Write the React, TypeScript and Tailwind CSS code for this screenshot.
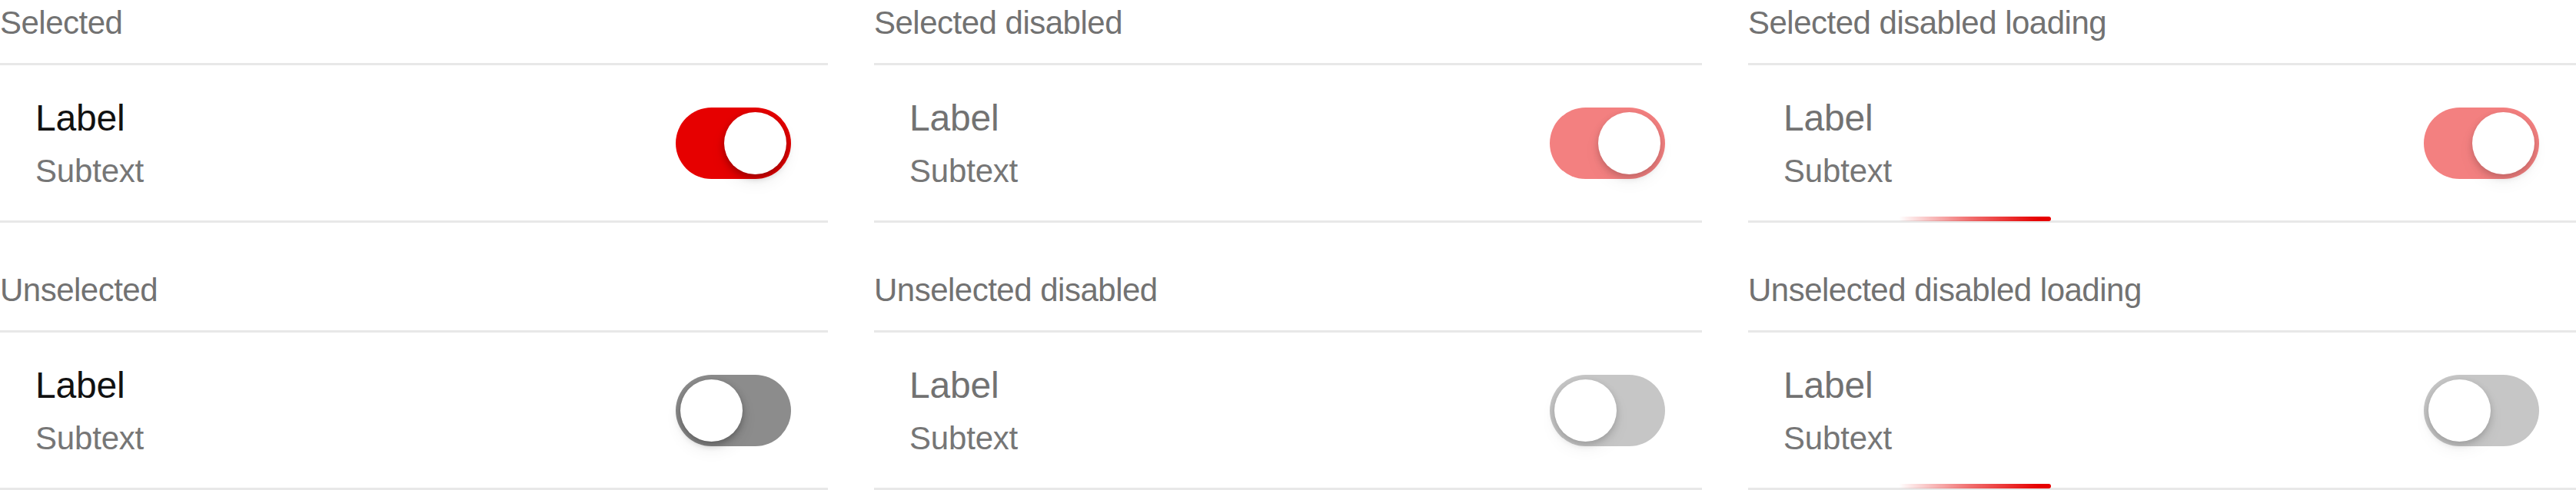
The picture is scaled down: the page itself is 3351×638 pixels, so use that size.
import React from 'react';

type Variant = {
  title: string;
  on: boolean;
  disabled?: boolean;
  loading?: boolean;
};

const font = { fontFamily: '"Liberation Sans", Arial, sans-serif' };

const Toggle = ({ on, disabled }: { on: boolean; disabled?: boolean }) => {
  const track = on
    ? disabled
      ? 'bg-[#f38080]'
      : 'bg-[#e60000]'
    : disabled
      ? 'bg-[#c6c6c6]'
      : 'bg-[#8c8c8c]';
  return (
    <div className={`w-[150px] h-[93px] rounded-full p-[6px] flex shrink-0 ${on ? 'justify-end' : 'justify-start'} ${track}`}>
      <div
        className={`w-[81px] h-[81px] rounded-full bg-white ${
          disabled
            ? 'shadow-[0_4px_10px_rgba(0,0,0,0.18),0_10px_22px_rgba(0,0,0,0.05)]'
            : 'shadow-[0_4px_10px_rgba(0,0,0,0.3),0_10px_22px_rgba(0,0,0,0.07)]'
        }`}
      />
    </div>
  );
};

const Section = ({ title, on, disabled, loading }: Variant) => (
  <div className="flex flex-col">
    <div className="h-[82px] text-[42px] leading-[60px] text-[#727272] tracking-[-0.012em] whitespace-nowrap border-b-[3px] border-[#e8e8e8] box-content">
      {title}
    </div>
    <div className="relative h-[202px] box-content border-b-[3px] border-[#e8e8e8] flex items-center justify-between pl-[46px] pr-[48px]">
      <div className="flex flex-col tracking-[-0.012em]">
        <span className={`text-[48px] leading-[74px] ${disabled ? 'text-[#727272]' : 'text-[#111]'}`}>Label</span>
        <span className="text-[42px] leading-[64px] text-[#767676]">Subtext</span>
      </div>
      <Toggle on={on} disabled={disabled} />
      {loading && (
        <div className="absolute left-[196px] bottom-[-1px] w-[198px] h-[6px] rounded-r-full bg-[linear-gradient(to_right,rgba(230,0,0,0),rgba(230,0,0,0.55)_45%,#e60000_92%)]" />
      )}
    </div>
  </div>
);

const columns: Variant[][] = [
  [
    { title: 'Selected', on: true },
    { title: 'Unselected', on: false },
  ],
  [
    { title: 'Selected disabled', on: true, disabled: true },
    { title: 'Unselected disabled', on: false, disabled: true },
  ],
  [
    { title: 'Selected disabled loading', on: true, disabled: true, loading: true },
    { title: 'Unselected disabled loading', on: false, disabled: true, loading: true },
  ],
];

export default function App() {
  return (
    <div className="w-[3351px] h-[638px] bg-white overflow-hidden grid grid-cols-3 gap-x-[60px]" style={font}>
      {columns.map((col, i) => (
        <div key={i} className="flex flex-col gap-[58px]">
          {col.map((v) => (
            <Section key={v.title} {...v} />
          ))}
        </div>
      ))}
    </div>
  );
}
